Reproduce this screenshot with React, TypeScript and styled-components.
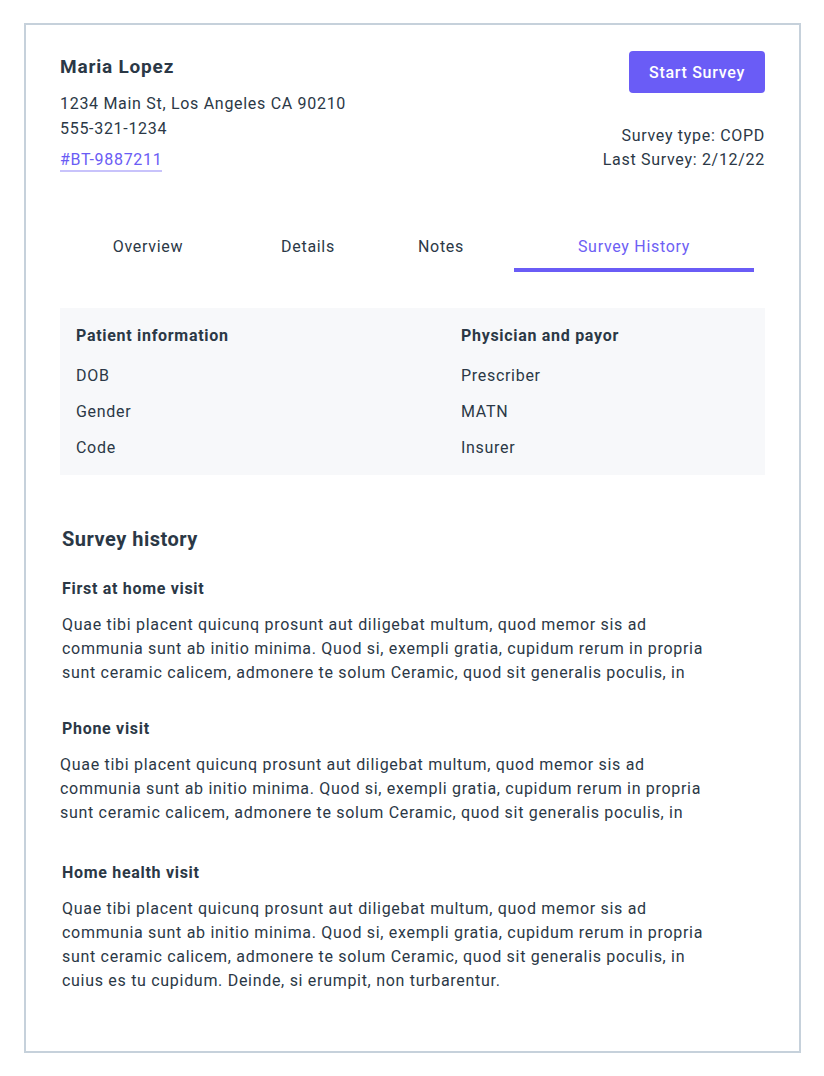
import React from 'react';
import styled, { createGlobalStyle } from 'styled-components';

const GlobalStyle = createGlobalStyle`
  html, body {
    margin: 0;
    padding: 0;
    background: #ffffff;
  }
  body {
    font-family: Roboto, "Liberation Sans", sans-serif;
    letter-spacing: 0.7px;
    color: #2b3846;
  }
`;

const Card = styled.div`
  box-sizing: border-box;
  width: 777px;
  height: 1030px;
  margin: 23px 0 0 24px;
  border: 2px solid #c6d1db;
  padding: 26px 34px 0 34px;
`;

const Header = styled.header`
  display: flex;
  justify-content: space-between;
  align-items: flex-start;
`;

const Identity = styled.div`
  display: flex;
  flex-direction: column;
  align-items: flex-start;
`;

const Name = styled.h1`
  margin: 0;
  font-size: 19px;
  line-height: 32px;
  font-weight: 700;
  letter-spacing: 0.8px;
`;

const InfoLine = styled.div`
  font-size: 16px;
  line-height: 25px;
`;

const Address = styled(InfoLine)`
  margin-top: 8px;
`;

const RecordLink = styled.a`
  display: inline-block;
  margin-top: 9px;
  font-size: 16px;
  line-height: 20px;
  color: #6a5cf5;
  text-decoration: none;
  border-bottom: 2px solid #c8c3fb;
`;

const Meta = styled.div`
  display: flex;
  flex-direction: column;
  align-items: flex-end;
`;

const StartButton = styled.button`
  width: 136px;
  height: 42px;
  border: none;
  border-radius: 4px;
  background: #6a5cf6;
  color: #ffffff;
  font-family: inherit;
  font-size: 16px;
  font-weight: 500;
  letter-spacing: 0.7px;
  margin-bottom: 31px;
  cursor: pointer;
`;

const MetaLine = styled.div`
  font-size: 16px;
  line-height: 24px;
  text-align: right;
`;

const Tabs = styled.nav`
  display: grid;
  grid-template-columns: 200px 120px 146px 240px;
  margin: 63px 0 0 -12px;
`;

const Tab = styled.div<{ $active?: boolean }>`
  text-align: center;
  font-size: 16px;
  line-height: 24px;
  padding-bottom: 9px;
  color: ${p => (p.$active ? '#6d60f4' : '#2b3846')};
  border-bottom: 4px solid ${p => (p.$active ? '#6a5cf6' : 'transparent')};
`;

const InfoPanel = styled.section`
  display: grid;
  grid-template-columns: 385px 1fr;
  margin-top: 36px;
  padding: 16px 16px 15px;
  background: #f7f8fa;
`;

const InfoColumn = styled.div`
  display: flex;
  flex-direction: column;
  gap: 12px;
`;

const InfoTitle = styled.div`
  font-size: 16px;
  line-height: 24px;
  font-weight: 700;
  margin-bottom: 4px;
`;

const InfoItem = styled.div`
  font-size: 16px;
  line-height: 24px;
`;

const History = styled.section`
  margin-top: 50px;
  padding-left: 2px;
`;

const HistoryTitle = styled.h2`
  margin: 0 0 24px;
  font-size: 20px;
  line-height: 28px;
  font-weight: 700;
  letter-spacing: 0.5px;
`;

const Visit = styled.article<{ $gap: number }>`
  margin-bottom: ${p => p.$gap}px;
`;

const VisitTitle = styled.h3`
  margin: 0 0 12px;
  font-size: 16px;
  line-height: 24px;
  font-weight: 700;
`;

const VisitText = styled.p<{ $shift: number }>`
  margin: 0 0 0 ${p => p.$shift}px;
  max-width: 650px;
  font-size: 16px;
  line-height: 24px;
`;

const lorem =
  'Quae tibi placent quicunq prosunt aut diligebat multum, quod memor sis ad communia sunt ab initio minima. Quod si, exempli gratia, cupidum rerum in propria sunt ceramic calicem, admonere te solum Ceramic, quod sit generalis poculis, in';

const visits = [
  { title: 'First at home visit', text: lorem, gap: 32, shift: 0 },
  { title: 'Phone visit', text: lorem, gap: 36, shift: -2 },
  {
    title: 'Home health visit',
    text: lorem + ' cuius es tu cupidum. Deinde, si erumpit, non turbarentur.',
    gap: 0,
    shift: 0,
  },
];

const tabs = ['Overview', 'Details', 'Notes', 'Survey History'];

const App: React.FC = () => {
  return (
    <>
      <GlobalStyle />
      <Card>
        <Header>
          <Identity>
            <Name>Maria Lopez</Name>
            <Address>1234 Main St, Los Angeles CA 90210</Address>
            <InfoLine>555-321-1234</InfoLine>
            <RecordLink href="#">#BT-9887211</RecordLink>
          </Identity>
          <Meta>
            <StartButton>Start Survey</StartButton>
            <MetaLine>Survey type: COPD</MetaLine>
            <MetaLine>Last Survey: 2/12/22</MetaLine>
          </Meta>
        </Header>

        <Tabs>
          {tabs.map(t => (
            <Tab key={t} $active={t === 'Survey History'}>
              {t}
            </Tab>
          ))}
        </Tabs>

        <InfoPanel>
          <InfoColumn>
            <InfoTitle>Patient information</InfoTitle>
            <InfoItem>DOB</InfoItem>
            <InfoItem>Gender</InfoItem>
            <InfoItem>Code</InfoItem>
          </InfoColumn>
          <InfoColumn>
            <InfoTitle>Physician and payor</InfoTitle>
            <InfoItem>Prescriber</InfoItem>
            <InfoItem>MATN</InfoItem>
            <InfoItem>Insurer</InfoItem>
          </InfoColumn>
        </InfoPanel>

        <History>
          <HistoryTitle>Survey history</HistoryTitle>
          {visits.map(v => (
            <Visit key={v.title} $gap={v.gap}>
              <VisitTitle>{v.title}</VisitTitle>
              <VisitText $shift={v.shift}>{v.text}</VisitText>
            </Visit>
          ))}
        </History>
      </Card>
    </>
  );
};

export default App;
